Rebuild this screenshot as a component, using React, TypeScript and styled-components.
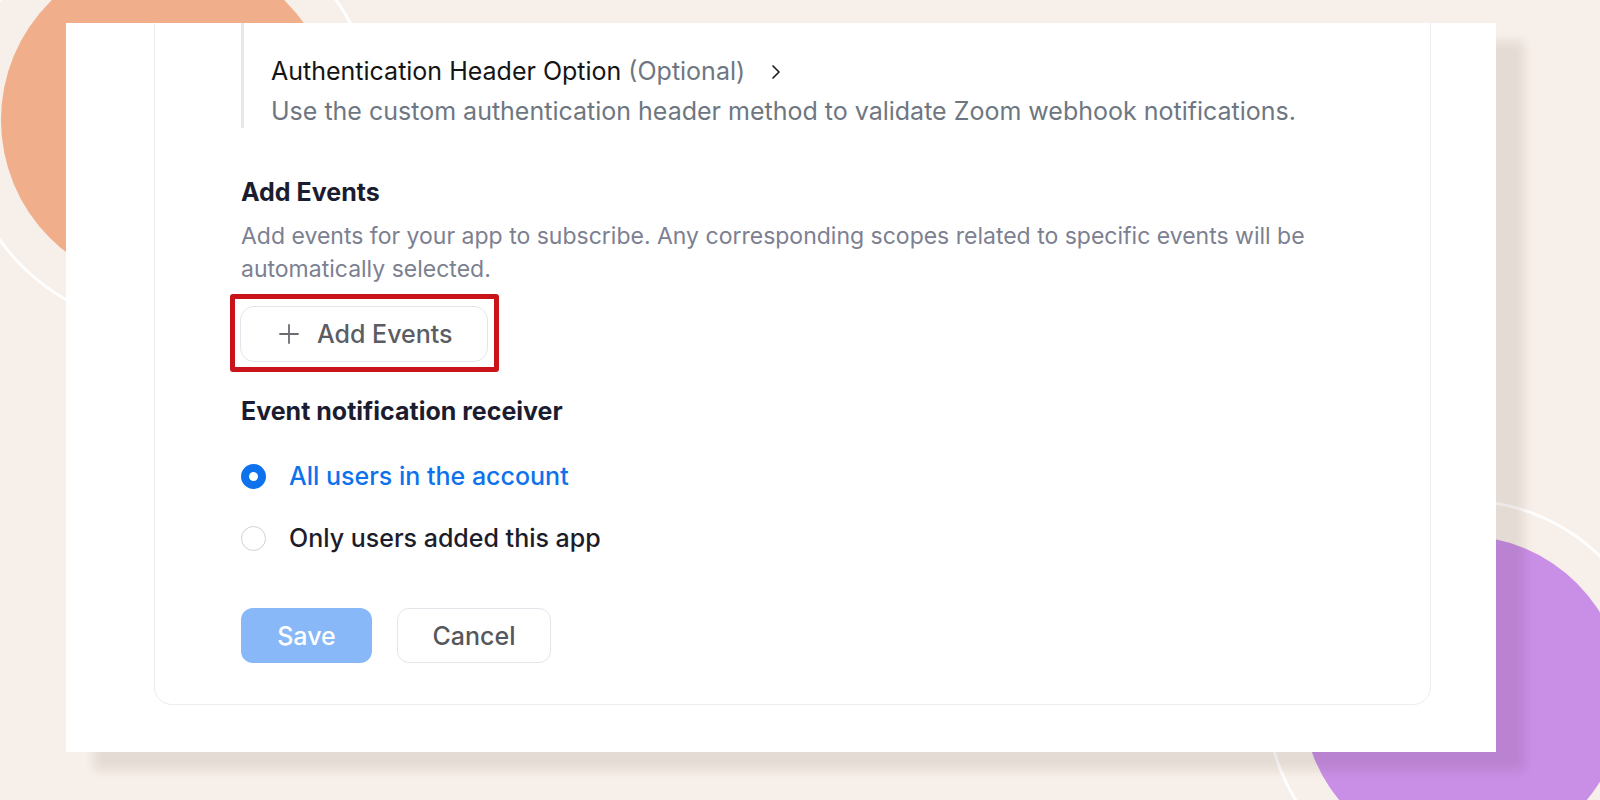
import React from "react";
import styled, { createGlobalStyle } from "styled-components";

const Global = createGlobalStyle`
  html, body { margin: 0; padding: 0; }
  body {
    width: 1600px;
    height: 800px;
    overflow: hidden;
    background: #f7efe9;
    font-family: Inter, "Noto Sans", "Liberation Sans", sans-serif;
    -webkit-font-smoothing: antialiased;
  }
  * { box-sizing: border-box; }
`;

const Page = styled.div`
  position: relative;
  width: 1600px;
  height: 800px;
  overflow: hidden;
  padding: 23px 0 0 66px;
`;

const Blob = styled.div<{ $x: number; $y: number; $r: number; $color: string }>`
  position: absolute;
  left: ${(p) => p.$x - p.$r}px;
  top: ${(p) => p.$y - p.$r}px;
  width: ${(p) => p.$r * 2}px;
  height: ${(p) => p.$r * 2}px;
  border-radius: 50%;
  background: ${(p) => p.$color};
`;

const Ring = styled.div<{ $x: number; $y: number; $r: number }>`
  position: absolute;
  left: ${(p) => p.$x - p.$r}px;
  top: ${(p) => p.$y - p.$r}px;
  width: ${(p) => p.$r * 2}px;
  height: ${(p) => p.$r * 2}px;
  border-radius: 50%;
  border: 3px solid rgba(255, 255, 255, 0.92);
`;

const Panel = styled.main`
  position: relative;
  width: 1430px;
  height: 729px;
  background: #ffffff;
  overflow: hidden;
  display: flex;
  flex-direction: column;
  justify-content: flex-end;
  padding: 0 65px 47px 88px;
  box-shadow: 28px 18px 10px rgba(40, 20, 10, 0.09);
`;

const Card = styled.section`
  flex-shrink: 0;
  border: 1px solid #ececf1;
  border-radius: 18px;
  padding: 0 60px 41px 86px;
  display: flex;
  flex-direction: column;
`;

const OptionBlock = styled.div`
  border-left: 3px solid #e5e7eb;
  padding: 80px 0 0 27px;
  display: flex;
  flex-direction: column;
  gap: 7px;
`;

const OptionTitle = styled.div`
  display: flex;
  align-items: center;
  font-size: 25px;
  line-height: 33px;
  color: #141414;
  font-weight: 400;
`;

const Muted = styled.span`
  color: #6e7781;
  margin-left: 7px;
`;

const ChevronBox = styled.span`
  display: inline-flex;
  margin-left: 26px;
  color: #202020;
`;

const OptionDesc = styled.p`
  margin: 0;
  font-size: 25px;
  line-height: 33px;
  color: #6e7781;
`;

const Section = styled.div<{ $mt: number }>`
  margin-top: ${(p) => p.$mt}px;
  display: flex;
  flex-direction: column;
  align-items: flex-start;
`;

const SectionTitle = styled.h3`
  margin: 0;
  font-size: 25px;
  line-height: 33px;
  font-weight: 700;
  color: #1c1c30;
`;

const SectionDesc = styled.p`
  margin: 11px 0 0;
  width: 1110px;
  font-size: 23px;
  line-height: 33px;
  color: #7c8090;
`;

const Highlight = styled.div`
  margin: 8px 0 0 -11px;
  border: 5px solid #c8131b;
  border-radius: 3px;
  padding: 7px 6px 5px 5px;
  display: inline-flex;
`;

const OutlineButton = styled.button`
  display: inline-flex;
  align-items: center;
  gap: 18px;
  height: 56px;
  width: 248px;
  padding: 0 0 0 38px;
  border: 1px solid #e4e5ea;
  border-radius: 14px;
  background: #ffffff;
  font-family: inherit;
  font-size: 25px;
  font-weight: 500;
  color: #5b5d63;
`;

const RadioList = styled.div`
  margin-top: 28px;
  display: flex;
  flex-direction: column;
  gap: 22px;
`;

const RadioRow = styled.label`
  display: flex;
  align-items: center;
  gap: 23px;
  height: 40px;
`;

const RadioDot = styled.span<{ $checked?: boolean }>`
  width: 25px;
  height: 25px;
  border-radius: 50%;
  flex-shrink: 0;
  box-sizing: border-box;
  ${(p) =>
    p.$checked
      ? `border: 8.5px solid #0e72ed; background: #ffffff;`
      : `background: #ffffff; border: 1.5px solid #cfd2d8;`}
`;

const RadioLabel = styled.span<{ $checked?: boolean }>`
  font-size: 25px;
  line-height: 33px;
  color: ${(p) => (p.$checked ? "#0e72ed" : "#1c1c2a")};
  font-weight: 500;
`;

const Actions = styled.div`
  margin-top: 50px;
  display: flex;
  gap: 25px;
`;

const BaseButton = styled.button`
  height: 55px;
  border-radius: 12px;
  font-family: inherit;
  font-size: 25px;
  font-weight: 500;
  display: inline-flex;
  align-items: center;
  justify-content: center;
`;

const PrimaryButton = styled(BaseButton)`
  width: 131px;
  background: #88b8f7;
  border: none;
  color: #ffffff;
`;

const SecondaryButton = styled(BaseButton)`
  width: 154px;
  background: #ffffff;
  border: 1.5px solid #e4e5ea;
  color: #55575c;
`;

const Chevron = () => (
  <svg width="10" height="16" viewBox="0 0 10 16" fill="none">
    <path d="M2 2l6 6-6 6" stroke="currentColor" strokeWidth="1.7" strokeLinecap="round" strokeLinejoin="round" />
  </svg>
);

const Plus = () => (
  <svg width="20" height="20" viewBox="0 0 20 20" fill="none">
    <path d="M10 1v18M1 10h18" stroke="#6a6c72" strokeWidth="1.8" strokeLinecap="round" />
  </svg>
);

export default function App() {
  return (
    <>
      <Global />
      <Page>
        <Blob $x={168} $y={120} $r={167} $color="#f0ae8a" />
        <Ring $x={168} $y={120} $r={208} />
        <Blob $x={1463} $y={697} $r={161} $color="#c98ee5" />
        <Ring $x={1463} $y={697} $r={198} />
        <Panel>
          <Card>
            <OptionBlock>
              <OptionTitle>
                Authentication Header Option
                <Muted>(Optional)</Muted>
                <ChevronBox>
                  <Chevron />
                </ChevronBox>
              </OptionTitle>
              <OptionDesc>
                Use the custom authentication header method to validate Zoom webhook notifications.
              </OptionDesc>
            </OptionBlock>

            <Section $mt={48}>
              <SectionTitle>Add Events</SectionTitle>
              <SectionDesc>
                Add events for your app to subscribe. Any corresponding scopes related to specific events will be
                automatically selected.
              </SectionDesc>
              <Highlight>
                <OutlineButton>
                  <Plus />
                  Add Events
                </OutlineButton>
              </Highlight>
            </Section>

            <Section $mt={23}>
              <SectionTitle>Event notification receiver</SectionTitle>
              <RadioList>
                <RadioRow>
                  <RadioDot $checked />
                  <RadioLabel $checked>All users in the account</RadioLabel>
                </RadioRow>
                <RadioRow>
                  <RadioDot />
                  <RadioLabel>Only users added this app</RadioLabel>
                </RadioRow>
              </RadioList>
            </Section>

            <Actions>
              <PrimaryButton>Save</PrimaryButton>
              <SecondaryButton>Cancel</SecondaryButton>
            </Actions>
          </Card>
        </Panel>
      </Page>
    </>
  );
}
